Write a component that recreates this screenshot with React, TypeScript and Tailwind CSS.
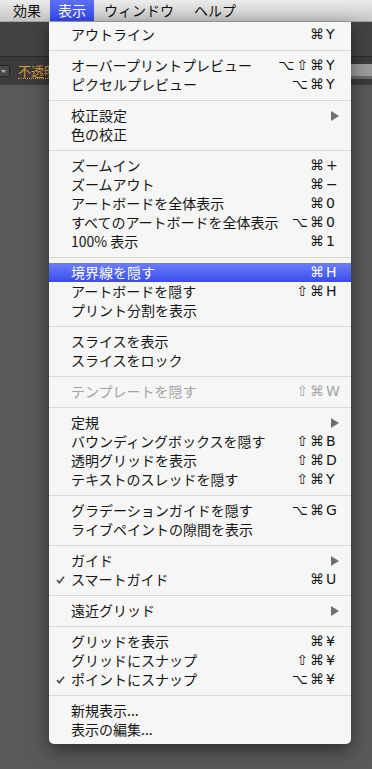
import React from 'react'

type Row =
  | 'sep'
  | {
      label: string
      mods?: string
      k?: string
      sub?: boolean
      check?: boolean
      disabled?: boolean
      active?: boolean
    }

const rows: Row[] = [
  { label: 'アウトライン', mods: '⌘', k: 'Y' },
  'sep',
  { label: 'オーバープリントプレビュー', mods: '⌥⇧⌘', k: 'Y' },
  { label: 'ピクセルプレビュー', mods: '⌥⌘', k: 'Y' },
  'sep',
  { label: '校正設定', sub: true },
  { label: '色の校正' },
  'sep',
  { label: 'ズームイン', mods: '⌘', k: '+' },
  { label: 'ズームアウト', mods: '⌘', k: '−' },
  { label: 'アートボードを全体表示', mods: '⌘', k: '0' },
  { label: 'すべてのアートボードを全体表示', mods: '⌥⌘', k: '0' },
  { label: '100% 表示', mods: '⌘', k: '1' },
  'sep',
  { label: '境界線を隠す', mods: '⌘', k: 'H', active: true },
  { label: 'アートボードを隠す', mods: '⇧⌘', k: 'H' },
  { label: 'プリント分割を表示' },
  'sep',
  { label: 'スライスを表示' },
  { label: 'スライスをロック' },
  'sep',
  { label: 'テンプレートを隠す', mods: '⇧⌘', k: 'W', disabled: true },
  'sep',
  { label: '定規', sub: true },
  { label: 'バウンディングボックスを隠す', mods: '⇧⌘', k: 'B' },
  { label: '透明グリッドを表示', mods: '⇧⌘', k: 'D' },
  { label: 'テキストのスレッドを隠す', mods: '⇧⌘', k: 'Y' },
  'sep',
  { label: 'グラデーションガイドを隠す', mods: '⌥⌘', k: 'G' },
  { label: 'ライブペイントの隙間を表示' },
  'sep',
  { label: 'ガイド', sub: true },
  { label: 'スマートガイド', mods: '⌘', k: 'U', check: true },
  'sep',
  { label: '遠近グリッド', sub: true },
  'sep',
  { label: 'グリッドを表示', mods: '⌘', k: '¥' },
  { label: 'グリッドにスナップ', mods: '⇧⌘', k: '¥' },
  { label: 'ポイントにスナップ', mods: '⌥⌘', k: '¥', check: true },
  'sep',
  { label: '新規表示...' },
  { label: '表示の編集...' },
]

function MenuRow({ row }: { row: Exclude<Row, 'sep'> }) {
  const color = row.active
    ? 'text-white bg-gradient-to-b from-[#6d7ef8] to-[#3a4af0]'
    : row.disabled
      ? 'text-[#a3a3a3]'
      : 'text-[#151515]'
  return (
    <div className={`relative flex h-[19px] items-center pl-[22px] pr-[13px] ${color}`}>
      {row.check && (
        <svg className="absolute left-[7px] top-[6px]" width="9" height="8" viewBox="0 0 9 8">
          <path d="M1 4.2 L3.4 6.6 L8 0.8" fill="none" stroke="#555" strokeWidth="1.8" />
        </svg>
      )}
      <span className="flex-1 whitespace-nowrap">{row.label}</span>
      {row.sub && (
        <svg width="8" height="10" viewBox="0 0 8 10" className="mr-[-1px]">
          <polygon points="0,0 8,5 0,10" fill="#707070" />
        </svg>
      )}
      {row.k && (
        <span className="flex items-center font-['DejaVu_Sans',sans-serif] text-[14px]">
          <span className="tracking-[2px]">{row.mods}</span>
          <span className="w-[12px] text-left">{row.k}</span>
        </span>
      )}
    </div>
  )
}

export default function App() {
  return (
    <div className="relative h-[769px] w-[372px] overflow-hidden bg-[#595959] font-['Noto_Sans_CJK_JP',sans-serif] text-[14px]">
      {/* menu bar */}
      <div className="flex h-[22px] items-center border-b border-[#a5a5a5] bg-gradient-to-b from-[#ececec] to-[#c6c6c6] text-[#111]">
        <span className="pl-[13px] pr-[9px]">効果</span>
        <span className="flex h-full items-center bg-gradient-to-b from-[#5d70f6] to-[#3346ef] px-[8px] text-white">
          表示
        </span>
        <span className="pl-[10px]">ウィンドウ</span>
        <span className="pl-[20px]">ヘルプ</span>
      </div>

      {/* dark panels behind */}
      <div className="h-[35px] border-b border-[#2b2b2b] bg-[#434343]" />
      <div className="flex h-[28px] items-center bg-[#3b3b3b]">
        <div className="ml-[-6px] flex h-[12px] w-[16px] items-center justify-end rounded-[2px] border border-[#262626] bg-[#4a4a4a] pr-[3px]">
          <svg width="5" height="3" viewBox="0 0 5 3">
            <polygon points="0,0 5,0 2.5,3" fill="#b5b5b5" />
          </svg>
        </div>
        <span className="ml-[8px] border-b border-dotted border-[#d69a38] text-[13px] leading-[15px] text-[#d69a38]">
          不透明度
        </span>
        <div className="ml-auto h-[15px] w-[21px] border-b-[3px] border-[#6b6b6b] bg-[#9b9b9b]" />
      </div>

      {/* view menu */}
      <div className="absolute left-[49px] top-[22px] w-[302px] rounded-b-[5px] bg-[#f6f6f6] pb-[5px] pt-[3px] shadow-[0_6px_18px_rgba(0,0,0,0.5)]">
        {rows.map((row, i) =>
          row === 'sep' ? (
            <div key={i} className="mb-[5px] mt-[6px] h-px bg-[#d8d8d8]" />
          ) : (
            <MenuRow key={i} row={row} />
          ),
        )}
      </div>
    </div>
  )
}
